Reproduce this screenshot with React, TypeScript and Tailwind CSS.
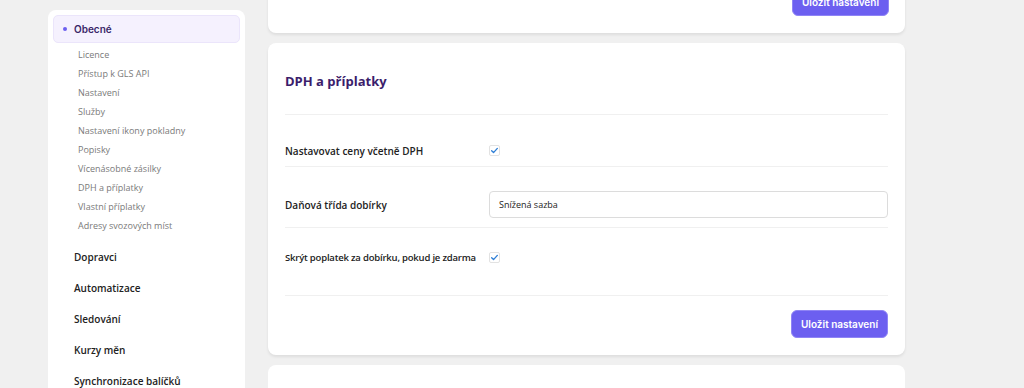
const subItems = [
  "Licence",
  "Přístup k GLS API",
  "Nastavení",
  "Služby",
  "Nastavení ikony pokladny",
  "Popisky",
  "Vícenásobné zásilky",
  "DPH a příplatky",
  "Vlastní příplatky",
  "Adresy svozových míst",
];

const mainItems = ["Dopravci", "Automatizace", "Sledování", "Kurzy měn", "Synchronizace balíčků"];

function Checkbox() {
  return (
    <span className="flex h-[11px] w-[11px] items-center justify-center rounded-[2px] border border-[#e2e2e2] bg-white">
      <svg viewBox="0 0 12 12" className="h-[9px] w-[9px]">
        <path d="M2.2 6.4 4.7 8.8 9.8 3.2" fill="none" stroke="#2f7fd6" strokeWidth="1.8" strokeLinecap="round" strokeLinejoin="round" />
      </svg>
    </span>
  );
}

function SaveButton() {
  return (
    <button className="h-[28px] w-[97px] rounded-[6px] border border-[#8f84f5] bg-[#6c5ff0] font-['Inter'] text-[10px] font-semibold text-white">
      Uložit nastavení
    </button>
  );
}

export default function App() {
  return (
    <div className="flex h-[388px] gap-[23px] overflow-hidden bg-[#f0f0f0] pl-[48px] font-['Open_Sans',sans-serif]">
      <aside className="mt-[10px] w-[197px] shrink-0 rounded-t-[8px] bg-white px-[5px] pt-[5px]">
        <div className="flex h-[28px] items-center rounded-[5px] border border-[#ebe5fb] bg-[#f5f1fe] pl-[9px]">
          <span className="h-[4px] w-[4px] rounded-full bg-[#6c5ff0]" />
          <span className="ml-[7px] font-['Inter'] text-[10px] font-semibold text-[#3a2768]">Obecné</span>
        </div>
        <ul className="mt-[2px] flex flex-col pl-[25px]">
          {subItems.map((s) => (
            <li key={s} className="flex h-[19px] items-center text-[9px] text-[#7a7a7a]">
              {s}
            </li>
          ))}
        </ul>
        <ul className="mt-[7px] flex flex-col pl-[21px]">
          {mainItems.map((m) => (
            <li key={m} className="flex h-[31px] items-center whitespace-nowrap text-[10px] font-semibold text-[#222]">
              {m}
            </li>
          ))}
        </ul>
      </aside>

      <main className="flex w-[637px] shrink-0 flex-col gap-[10px]">
        <div className="-mt-[20px] flex h-[53px] shrink-0 items-end justify-end rounded-b-[8px] bg-white px-[16px] pb-[17px] shadow-[0_2px_3px_rgba(0,0,0,0.08)]">
          <SaveButton />
        </div>

        <section className="shrink-0 rounded-[8px] bg-white px-[17px] shadow-[0_2px_3px_rgba(0,0,0,0.08)]">
          <div className="border-b border-[#f0f0f0] pt-[28px] pb-[23px]">
            <h2 className="text-[13px] leading-[20px] font-bold text-[#3b1d6b]">DPH a příplatky</h2>
          </div>

          <div className="flex items-center border-b border-[#f0f0f0] pt-[29px] pb-[8px]">
            <span className="w-[204px] whitespace-nowrap text-[10px] leading-[14px] font-semibold text-[#222]">Nastavovat ceny včetně DPH</span>
            <div className="-mt-[2px]"><Checkbox /></div>
          </div>

          <div className="flex items-center border-b border-[#f0f0f0] pt-[24px] pb-[9px]">
            <span className="w-[204px] whitespace-nowrap text-[10px] leading-[14px] font-semibold text-[#222]">Daňová třída dobírky</span>
            <div className="flex h-[27px] flex-1 items-center rounded-[4px] border border-[#dcdcdc] px-[9px] text-[9px] text-[#222]">
              Snížená sazba
            </div>
          </div>

          <div className="flex items-center border-b border-[#f0f0f0] pt-[23px] pb-[30px]">
            <span className="w-[204px] shrink-0 whitespace-nowrap text-[9.5px] leading-[14px] font-semibold tracking-[-0.2px] text-[#222]">Skrýt poplatek za dobírku, pokud je zdarma</span>
            <div className="-mt-[2px]"><Checkbox /></div>
          </div>

          <div className="flex justify-end pt-[14px] pb-[17px]">
            <SaveButton />
          </div>
        </section>

        <div className="h-[40px] shrink-0 rounded-[8px] bg-white" />
      </main>
    </div>
  );
}
